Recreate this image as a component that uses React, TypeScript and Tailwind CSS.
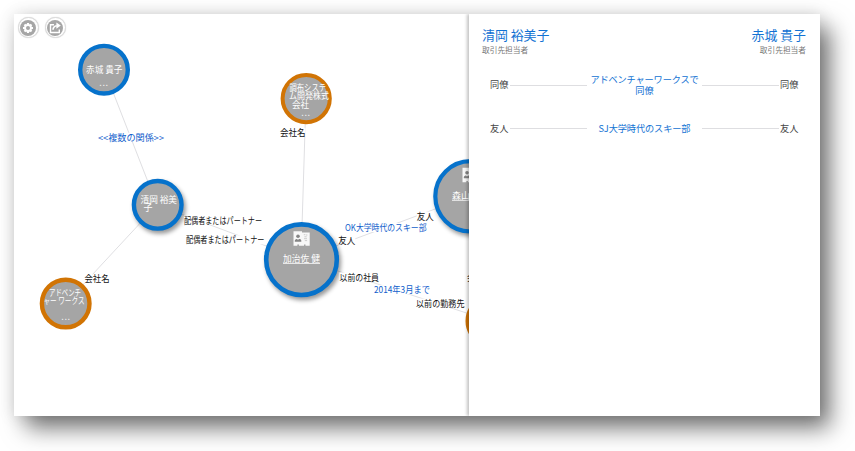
import React from "react";

type Line = { t: string; x: number; y: number; w: number; underline?: boolean };
type Node = { cx: number; cy: number; r: number; ring: string; b: number; shadow?: boolean; dots?: [number, number]; lines: Line[]; card?: [number, number] };

const BLUE = "#0672cb";
const ORANGE = "#d17404";

const nodes: Node[] = [
  { cx: 104, cy: 69.7, r: 26, b: 4.4, ring: BLUE, dots: [104, 85], lines: [{ t: "赤城 貴子", x: 86, y: 72.6, w: 36.5 }] },
  { cx: 157.7, cy: 204.8, r: 26, b: 4.4, ring: BLUE, shadow: true, lines: [{ t: "清岡 裕美", x: 140.5, y: 202.6, w: 36.5 }, { t: "子", x: 143.5, y: 211.2, w: 9 }] },
  { cx: 306.2, cy: 98.6, r: 25.6, b: 4, ring: ORANGE, dots: [306, 114.5], lines: [{ t: "調布システ", x: 289.5, y: 90.8, w: 36.5 }, { t: "ム開発株式", x: 289, y: 99.3, w: 40 }, { t: "会社", x: 292, y: 107.7, w: 17 }] },
  { cx: 65.7, cy: 303.5, r: 26, b: 4.4, ring: ORANGE, dots: [66, 319], lines: [{ t: "アドベンチ", x: 49, y: 295.5, w: 32 }, { t: "ャー ワークス", x: 43.5, y: 304, w: 41 }] },
  { cx: 301.5, cy: 259.7, r: 37.6, b: 4.6, ring: BLUE, shadow: true, card: [293, 231], lines: [{ t: "加治佐 健", x: 283, y: 262.4, w: 37, underline: true }] },
  { cx: 470.5, cy: 196.3, r: 37.3, b: 4.2, ring: BLUE, shadow: true, card: [462, 167.5], lines: [{ t: "森山 純", x: 452, y: 199.3, w: 29, underline: true }] },
  { cx: 491.5, cy: 321, r: 26, b: 4.4, ring: ORANGE, lines: [] },
];

const edges = [
  [104, 69, 157, 205], [157, 205, 66, 303], [306, 98, 301, 259],
  [157, 205, 301, 259], [301, 259, 470, 196], [301, 259, 491, 321],
];

const labels: (Line & { link?: boolean })[] = [
  { t: "<<複数の関係>>", x: 98, y: 140.8, w: 66, link: true },
  { t: "配偶者またはパートナー", x: 184, y: 223.6, w: 78 },
  { t: "配偶者またはパートナー", x: 186, y: 243.3, w: 78.5 },
  { t: "会社名", x: 280, y: 135.8, w: 25.5 },
  { t: "会社名", x: 84.5, y: 282.3, w: 25 },
  { t: "友人", x: 338.3, y: 244.2, w: 17 },
  { t: "友人", x: 416.7, y: 219.6, w: 17 },
  { t: "OK大学時代のスキー部", x: 345, y: 231, w: 81.5, link: true },
  { t: "以前の社員", x: 339.5, y: 280.5, w: 39.5 },
  { t: "2014年3月まで", x: 374, y: 293.2, w: 56, link: true },
  { t: "以前の勤務先", x: 416, y: 306.6, w: 48.5 },
  { t: "会社名", x: 467, y: 281, w: 25 },
];

function ContactCard({ x, y }: { x: number; y: number }) {
  return (
    <g transform={`translate(${x} ${y})`}>
      <path d="M0.5 0.3H9V1.5H16.7V14.7H12.5V13.4H11V14.7H6V13.4H4.3V14.7H0.5Z" fill="#f8f8f8" />
      <circle cx="5" cy="5.2" r="1.8" fill="#858585" />
      <path d="M1.8 10.8V9.6C2.2 8.2 3.5 8.1 4.1 8L5 9 5.9 8C7 8.1 8.1 8.3 8.3 9.6V10.8Z" fill="#858585" />
      <path d="M10.8 3.7h1.6M13 4h1.4M11.4 5.8h2.3M11 7.7h3M11.8 9.6h2.3" stroke="#c0c0c0" strokeWidth="0.8" />
    </g>
  );
}

function Graph() {
  return (
    <svg viewBox="14 14 455 402" className="block h-[402px] w-[455px] font-['Noto_Sans_CJK_JP','Noto_Sans',sans-serif] text-[9px]">
      <g stroke="#dfdfe2" strokeWidth="1">
        {edges.map(([a, b, c, d], i) => <line key={i} x1={a} y1={b} x2={c} y2={d} />)}
      </g>
      {nodes.map((n, i) => (
        <g key={i}>
          <g className={n.shadow ? "drop-shadow-[2px_3px_2px_rgba(0,0,0,0.4)]" : ""}>
            <circle cx={n.cx} cy={n.cy} r={n.r - n.b / 2} fill="#a5a5a5" stroke={n.ring} strokeWidth={n.b} />
          </g>
          {n.card && <ContactCard x={n.card[0]} y={n.card[1]} />}
          {n.lines.map((l) => (
            <g key={l.t}>
              <text x={l.x} y={l.y} textLength={l.w} lengthAdjust="spacingAndGlyphs" fill="#fff" className="text-[8.7px]">{l.t}</text>
              {l.underline && <line x1={l.x} x2={l.x + l.w} y1={l.y + 1.1} y2={l.y + 1.1} stroke="#eee" strokeWidth="0.9" />}
            </g>
          ))}
          {n.dots && <text x={n.dots[0]} y={n.dots[1] + 1} textAnchor="middle" letterSpacing="0.6" fill="#eee">...</text>}
        </g>
      ))}
      {labels.map((l, i) => (
        <g key={i}>
          <rect x={l.x} y={l.y - 8} width={l.w} height="9" fill="#fff" />
          <text x={l.x} y={l.y} textLength={l.w} lengthAdjust="spacingAndGlyphs" fill={l.link ? "#1160cc" : "#111"}>{l.t}</text>
        </g>
      ))}
    </svg>
  );
}

function RoundButton({ label, children }: { label: string; children: React.ReactNode }) {
  return (
    <button aria-label={label} className="flex size-[21px] items-center justify-center rounded-full border border-[#dcdcdc] bg-white shadow-[0_0_1px_#ccc]">
      <span className="flex size-4 shrink-0 items-center justify-center rounded-full bg-[#a6a6a6]">{children}</span>
    </button>
  );
}

function Relation({ role, children, className }: { role: string; children: React.ReactNode; className: string }) {
  return (
    <div className={`flex items-center text-[9.2px] text-[#444] ${className}`}>
      <span className="w-[20px] whitespace-nowrap">{role}</span>
      <span className="h-px w-[77px] bg-[#dedee1]" />
      <span className="w-[115px] whitespace-nowrap text-center leading-[11px] text-[#1272d3]">{children}</span>
      <span className="h-px w-[77px] bg-[#dedee1]" />
      <span className="w-[21px] whitespace-nowrap pl-[1px]">{role}</span>
    </div>
  );
}

function Person({ name, className }: { name: string; className: string }) {
  return (
    <div className={className}>
      <div className="h-[19px] whitespace-nowrap text-[12.9px] leading-[19px] text-[#1272d3]">{name}</div>
      <div className="text-[7.7px] leading-[12px] text-[#777]">取引先担当者</div>
    </div>
  );
}

export default function App() {
  return (
    <div className="h-[451px] w-[855px] overflow-hidden bg-white pl-[14px] pt-[14px] font-['Noto_Sans_CJK_JP','Noto_Sans',sans-serif]">
      <div className="relative flex h-[402px] w-[806px] bg-white shadow-[11px_13px_22px_-1px_rgba(0,0,0,0.54),0_0_16px_rgba(0,0,0,0.13)]">
        <main className="w-[455px] overflow-hidden">
          <Graph />
        </main>
        <aside className="relative w-[351px] bg-white shadow-[-2px_0_3px_rgba(0,0,0,0.24)] [clip-path:inset(0_0_0_-8px)]">
          <div className="flex justify-between pl-[13px] pr-[14px] pt-[11px]">
            <Person name="清岡 裕美子" className="" />
            <Person name="赤城 貴子" className="text-right" />
          </div>
          <Relation role="同僚" className="ml-[21px] mt-[18px]">
            <span className="inline-block tracking-[-0.15px]">アドベンチャーワークスで</span><br />同僚
          </Relation>
          <Relation role="友人" className="ml-[21px] mt-[26px]">
            <span className="tracking-[-0.1px]">SJ大学時代のスキー部</span>
          </Relation>
        </aside>
        <div className="absolute left-[3.5px] top-[3px] flex gap-[6px]">
          <RoundButton label="設定">
            <svg viewBox="0 0 16 16" className="size-4">
              <g stroke="#fff" strokeWidth="2.2">
                <path d="M8 3V13M3 8H13M4.5 4.5L11.5 11.5M11.5 4.5L4.5 11.5" />
              </g>
              <circle cx="8" cy="8" r="3.9" fill="#fff" />
              <circle cx="8" cy="8" r="2" fill="#a6a6a6" />
            </svg>
          </RoundButton>
          <RoundButton label="共有">
            <svg viewBox="0 0 16 16" className="size-4" fill="none" stroke="#fff">
              <path d="M7 4.7H3.5V12.5H12.3V9.5" strokeWidth="1.4" />
              <path d="M6 9.7C6.2 7.3 7.6 6 9.8 5.7" strokeWidth="1.6" />
              <path d="M9.4 2.4L13.8 5.6L9.4 8.8Z" fill="#fff" stroke="none" />
            </svg>
          </RoundButton>
        </div>
      </div>
    </div>
  );
}
